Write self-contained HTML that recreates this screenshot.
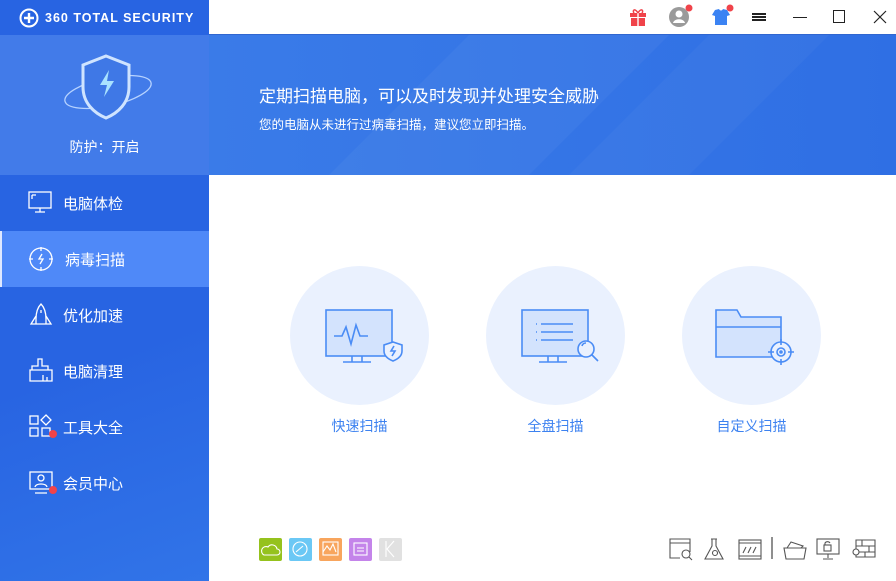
<!DOCTYPE html>
<html><head><meta charset="utf-8"><style>
*{margin:0;padding:0;box-sizing:border-box}
body{width:896px;height:581px;overflow:hidden;font-family:"Liberation Sans","Noto Sans CJK SC",sans-serif;background:#fff;position:relative}
.side{position:absolute;left:0;top:0;width:209px;height:581px;background:linear-gradient(160deg,#2864e2 60%,#3174e8);overflow:hidden}
.logo{height:35px;display:flex;align-items:center;padding-left:19px;color:#fff;font-weight:bold;font-size:12.5px;letter-spacing:1px}
.prot{position:absolute;top:35px;left:0;width:209px;height:140px;background:#427be9;color:#fff;text-align:center}
.prot .t{position:absolute;top:102px;width:100%;font-size:14px}
.item{position:absolute;left:0;width:209px;height:56px;display:flex;align-items:center;color:#fff;font-size:15px}
.item svg{position:absolute;left:28px}
.item span{position:absolute;left:63px}
.sel{background:#4f89f8;border-left:2px solid #dfe8ff}
.dot{position:absolute;width:8px;height:8px;border-radius:50%;background:#f0434a}
.top{position:absolute;left:209px;top:0;right:0;height:35px;background:#fff;border-bottom:1px solid #3066d0}
.banner{position:absolute;left:209px;top:35px;right:0;height:140px;background:linear-gradient(90deg,#3a7be8,#2f6fe4);color:#fff;overflow:hidden}
.banner h1{position:absolute;left:50px;top:47px;font-size:17px;font-weight:normal}
.banner p{position:absolute;left:50px;top:79px;font-size:12.5px}
.circ{position:absolute;top:266px;width:139px;height:139px;border-radius:50%;background:#eaf1fe}
.lab{position:absolute;top:416px;width:139px;text-align:center;color:#3d82f0;font-size:14px}
.sq{position:absolute;top:538px;width:23px;height:23px;border-radius:2px}
</style></head><body>
<div class="side">
 <div class="logo"><svg width="20" height="20" viewBox="0 0 20 20" style="margin-right:6px"><circle cx="10" cy="10" r="8.5" fill="none" stroke="#fff" stroke-width="2"/><path d="M10 5v10M5 10h10" stroke="#fff" stroke-width="2.4"/></svg>360 TOTAL SECURITY</div>
 <div class="prot">
  <svg width="100" height="80" viewBox="0 0 100 80" style="position:absolute;left:58px;top:15px"><ellipse cx="50" cy="42" rx="44" ry="14" transform="rotate(-12 50 42)" fill="none" stroke="#b7d3ff" stroke-width="1.3"/><path d="M48 6l23 9v22c0 16-11 26-23 31C36 63 25 53 25 37V15z" fill="#3f78e6" stroke="#cfe4ff" stroke-width="3"/><path d="M51 20l-9 15h7l-3 12 10-16h-7z" fill="#a9e2ff"/></svg>
  <div class="t">防护：开启</div>
 </div>
 <div class="item" style="top:175px"><svg width="26" height="24" viewBox="0 0 26 24" fill="none" stroke="#fff" stroke-width="1.3"><rect x="1" y="1" width="22" height="16"/><path d="M4 4h4M4 4v4M12 17v4M7 21h10"/></svg><span>电脑体检</span></div>
 <div class="item sel" style="top:231px"><svg width="26" height="26" viewBox="0 0 26 26" fill="none" stroke="#fff" stroke-width="1.3" style="left:26px"><circle cx="13" cy="13" r="11"/><path d="M13 1v4M13 21v4M1 13h4M21 13h4"/><path d="M14 8l-3 5h4l-3 5" /></svg><span>病毒扫描</span></div>
 <div class="item" style="top:287px"><svg width="26" height="26" viewBox="0 0 26 26" fill="none" stroke="#fff" stroke-width="1.3"><path d="M13 2c4 4 5 9 5 15v5H8v-5c0-6 1-11 5-15zM8 14l-5 8h5M18 14l5 8h-5"/><path d="M13 8v3"/></svg><span>优化加速</span></div>
 <div class="item" style="top:343px"><svg width="26" height="26" viewBox="0 0 26 26" fill="none" stroke="#fff" stroke-width="1.3"><path d="M10 1h4v7h6v4H4V8h6zM2 12h22v11H2zM15 17v6M19 19v4"/></svg><span>电脑清理</span></div>
 <div class="item" style="top:399px"><svg width="26" height="26" viewBox="0 0 26 26" fill="none" stroke="#fff" stroke-width="1.3"><rect x="2" y="2" width="8" height="8"/><rect x="2" y="14" width="8" height="8"/><rect x="14" y="14" width="8" height="8"/><path d="M18 1l5 5-5 5-5-5z"/></svg><div class="dot" style="left:49px;top:31px"></div><span>工具大全</span></div>
 <div class="item" style="top:455px"><svg width="26" height="26" viewBox="0 0 26 26" fill="none" stroke="#fff" stroke-width="1.3"><rect x="2" y="2" width="22" height="17"/><circle cx="13" cy="8" r="3"/><path d="M7 17c1-4 11-4 12 0M7 23h12"/></svg><div class="dot" style="left:49px;top:31px"></div><span>会员中心</span></div>
</div>
<div class="top">
 <svg width="20" height="20" viewBox="0 0 20 20" style="position:absolute;left:419px;top:7px"><rect x="2" y="6" width="16" height="4" fill="#f0434a"/><rect x="3" y="11" width="14" height="8" fill="#f0434a"/><path d="M10 6v13" stroke="#fff" stroke-width="1.4"/><path d="M10 6C7 1 4 3 6 6M10 6c3-5 6-3 4 0" stroke="#f0434a" fill="none" stroke-width="1.5"/></svg>
 <svg width="26" height="26" viewBox="0 0 26 26" style="position:absolute;left:459px;top:4px"><circle cx="11" cy="13" r="10" fill="#9a9a9a"/><circle cx="11" cy="10" r="3.5" fill="#fff"/><path d="M5 19c1-5 11-5 12 0" fill="#fff"/><circle cx="21" cy="4" r="3.5" fill="#f0434a"/></svg>
 <svg width="26" height="26" viewBox="0 0 26 26" style="position:absolute;left:499px;top:4px"><path d="M7 6l4-1c1 2 3 2 4 0l4 1 3 5-3 1v9H7v-9l-3-1z" fill="#3b83f3"/><circle cx="22" cy="4" r="3.5" fill="#f0434a"/></svg>
 <div style="position:absolute;left:543px;top:13px;width:14px;height:1.5px;background:#222;box-shadow:0 3px #222,0 6px #222"></div>
 <div style="position:absolute;left:584px;top:17px;width:14px;height:1px;background:#222"></div>
 <div style="position:absolute;left:624px;top:10px;width:12px;height:13px;border:1px solid #222"></div>
 <svg width="14" height="14" style="position:absolute;left:664px;top:10px"><path d="M1 1l12 12M13 1L1 13" stroke="#222" stroke-width="1.2"/></svg>
</div>
<div class="banner">
 <svg width="687" height="140" style="position:absolute;left:0;top:0"><path d="M120 140L260 0h200L320 140z" fill="#fff" opacity=".04"/><path d="M360 140L500 0h120L480 140z" fill="#fff" opacity=".03"/></svg>
 <h1>定期扫描电脑，可以及时发现并处理安全威胁</h1>
 <p>您的电脑从未进行过病毒扫描，建议您立即扫描。</p>
</div>
<div class="circ" style="left:290px"></div>
<div class="circ" style="left:486px"></div>
<div class="circ" style="left:682px"></div>
<svg width="896" height="581" style="position:absolute;left:0;top:0" fill="none" stroke="#4a8cf5" stroke-width="1.6">
 <rect x="326" y="310" width="66" height="46" fill="#d3e3fd"/><path d="M334 336h8l4-9 5 17 5-19 4 11h8M352 356v6M362 356v6M343 362h28"/><path d="M393 342l9 3v6c0 5-4 8-9 10-5-2-9-5-9-10v-6z" fill="#eaf1fe"/><path d="M394 346l-3 5h4l-3 5"/>
 <rect x="522" y="310" width="66" height="46" fill="#d3e3fd"/><path d="M541 324h32M541 332h32M541 340h32M536 324h1M536 332h1M536 340h1M548 356v6M558 356v6M539 362h28"/><circle cx="586" cy="349" r="8" fill="#eaf1fe"/><path d="M592 355l6 6M582 346a4 4 0 0 1 4-3"/>
 <path d="M716 310h21l4 7h40v40h-65z" fill="#d3e3fd"/><path d="M716 327h65"/><circle cx="781" cy="352" r="10" fill="#eaf1fe"/><circle cx="781" cy="352" r="4"/><circle cx="781" cy="352" r="1" fill="#4a8cf5"/><path d="M781 339v6M781 359v6M768 352h6M788 352h6"/>
</svg>
<div class="lab" style="left:290px">快速扫描</div>
<div class="lab" style="left:486px">全盘扫描</div>
<div class="lab" style="left:682px">自定义扫描</div>
<div class="sq" style="left:259px;background:#95c21d"></div>
<div class="sq" style="left:289px;background:#6bc8f5"></div>
<div class="sq" style="left:319px;background:#f8a55d"></div>
<div class="sq" style="left:349px;background:#c484ea"></div>
<div class="sq" style="left:379px;background:#e1e1e1"></div>
<svg width="896" height="581" style="position:absolute;left:0;top:0" fill="none" stroke="#fff" stroke-width="1.1">
 <path d="M264 555h13a3 3 0 0 0 0-6 5 5 0 0 0-9-2 4 4 0 0 0-4 8z"/><circle cx="300" cy="549" r="7"/><path d="M296 552l7-6"/><rect x="323" y="542" width="15" height="13"/><path d="M323 552l4-6 3 4 3-6 3 8"/><rect x="354" y="543" width="13" height="12"/><path d="M357 548h7M357 551h7"/><path d="M386 541v16M394 541l-7 8 7 8"/>
</svg>
<svg width="896" height="581" style="position:absolute;left:0;top:0" fill="none" stroke="#555" stroke-width="1.1">
 <path d="M690 552v-13h-20v19h10M670 543h20"/><circle cx="686" cy="554" r="4"/><path d="M689 557l3 3"/>
 <path d="M711 539h6M712 539v7l-7 13h18l-7-13v-7"/><circle cx="715" cy="553" r="2.5"/>
 <rect x="739" y="540" width="22" height="19"/><path d="M739 543h22M739 556h22M743 553l3-6M748 553l3-6M753 553l3-6"/>
 <path d="M772 537v22" stroke="#333"/>
 <path d="M784 548h22l-2 11h-18zM787 548l4-6 12 4-2 2"/>
 <rect x="817" y="539" width="22" height="15"/><path d="M828 554v4M823 559h10"/><rect x="824" y="545" width="7" height="6"/><path d="M825 545v-2a3 3 0 0 1 5 0"/>
 <path d="M856 540h19v17h-19zM856 546h19M856 552h19M862 540v6M869 546v6M865 552v5"/><circle cx="856" cy="552" r="3" fill="#fff"/>
</svg>
</body></html>
